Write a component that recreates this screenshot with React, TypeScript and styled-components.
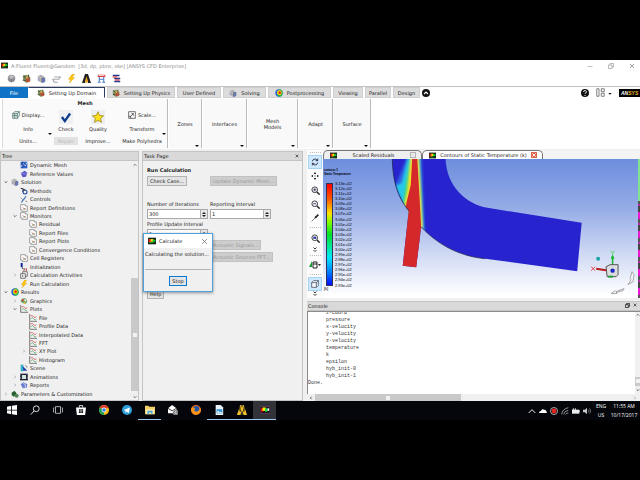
import React from "react";
import styled, { createGlobalStyle, css } from "styled-components";

const Global = createGlobalStyle`
  * { box-sizing: border-box; }
  body { margin: 0; background: #000; overflow: hidden; }
  body, button, input { font-family: "DejaVu Sans", "Noto Sans", sans-serif; font-size: 5px; line-height: 8px; color: #222; }
  button { margin: 0; padding: 0; border: 0; background: none; white-space: nowrap; }
  ul { margin: 0; padding: 0; list-style: none; }
  svg { display: block; flex: none; }
`;

/* ---------- shell ---------- */
const Screen = styled.div`
  min-height: 100vh;
  display: grid;
  grid-template-rows: 1fr 19px;
  grid-template-columns: minmax(0, 1fr);
  padding: 60px 0;
  background: #000;
`;
const AppWindow = styled.div`
  display: flex;
  flex-direction: column;
  background: #f0f0f0;
  min-width: 0;
`;
const TitleBar = styled.header`
  display: flex;
  align-items: center;
  gap: 3px;
  height: 11px;
  padding: 0 5px 0 1px;
  background: #fff;
  color: #8b8b8b;
  white-space: pre;
`;
const Spacer = styled.div`
  flex: 1;
`;
const WindowButtons = styled.div`
  display: flex;
  gap: 15px;
`;
const QuickBar = styled.div`
  display: flex;
  align-items: center;
  gap: 6px;
  height: 15px;
  padding-left: 7px;
  background: #fff;
`;
const TabRow = styled.nav`
  display: flex;
  align-items: stretch;
  gap: 2px;
  height: 12px;
  background: #fff;
  border-top: 1px solid #c2c2c2;
`;
const RibbonTab = styled.button<{ $kind?: "file" | "active"; $w: number }>`
  display: flex;
  align-items: center;
  justify-content: center;
  gap: 4px;
  width: ${(p) => p.$w}px;
  background: #dcdcdc;
  border: 1px solid #cfcfcf;
  ${(p) =>
    p.$kind === "file" &&
    css`
      background: #0f72c4;
      border-color: #0f72c4;
      color: #fff;
      margin-right: -2px;
    `}
  ${(p) =>
    p.$kind === "active" &&
    css`
      background: #fff;
      border-color: #2b3a63 #2b3a63 #fff #fff;
    `}
`;
const TabTools = styled.div`
  display: flex;
  align-items: center;
  gap: 7px;
`;
const LayoutButton = styled.button`
  display: flex;
  align-items: center;
  gap: 3px;
`;
const Brand = styled.span`
  width: 21px;
  padding-left: 2px;
  background: #000;
  color: #fff;
  font: italic bold 5px/8px "Liberation Sans", sans-serif;
  b { color: #e8b62c; }
`;

/* ---------- ribbon ---------- */
const Ribbon = styled.div`
  display: flex;
  height: 51px;
  padding: 1px 0 1px 2px;
  background: #fff;
`;
const MeshGroup = styled.section`
  display: grid;
  grid-template-columns: 50px 26px 38px 50px;
  grid-template-rows: 9px 14px 13px 12px;
  width: 166px;
  align-items: center;
  justify-items: center;
  background: #fafafa;
  border-left: 1px solid #ddd;
  border-right: 1px solid #bbb;
`;
const MeshTitle = styled.h2`
  grid-column: 1 / -1;
  margin: 0;
  font-size: 5px;
  line-height: 9px;
`;
const ToolButton = styled.button<{ $off?: boolean }>`
  display: flex;
  align-items: center;
  gap: 2px;
  padding: 0 1px;
  ${(p) => p.$off && "background:#e2e2e2;color:#bcbcbc;padding:0 4px;"}
`;
const TallButton = styled.button<{ $col: number }>`
  grid-row: 2 / span 2;
  grid-column: ${(p) => p.$col};
  display: flex;
  flex-direction: column;
  align-items: center;
  gap: 1px;
`;
const MenuTool = styled(ToolButton)`
  position: relative;
  width: 48px;
  justify-content: center;
  &::after { content: ""; position: absolute; right: 0; bottom: -2px; border: 2px solid transparent; border-top-color: #111; border-bottom: 0; }
`;
const DropGroup = styled.button<{ $w: number }>`
  position: relative;
  width: ${(p) => p.$w}px;
  margin-left: 1px;
  background: #f9f9f9;
  border-right: 1px solid #bbb;
  line-height: 6px;
  white-space: pre-line;
  &::after { content: ""; position: absolute; right: 2px; bottom: 1px; border: 2px solid transparent; border-top-color: #111; border-bottom: 0; }
`;

/* ---------- workspace ---------- */
const Workspace = styled.div`
  flex: 1;
  display: grid;
  grid-template-columns: 139px 161px minmax(0, 1fr);
  gap: 3px;
  padding-top: 2px;
  min-height: 0;
`;
const Panel = styled.section`
  position: relative;
  display: flex;
  flex-direction: column;
  border: 1px solid #c4c4c4;
  border-top: 0;
  min-width: 0;
`;
const PanelHead = styled.h3`
  display: flex;
  align-items: center;
  justify-content: space-between;
  height: 10px;
  margin: 0;
  padding: 0 3px 0 1px;
  background: #d9d9d9;
  border: 1px solid #c4c4c4;
  border-width: 1px 0;
  font-size: 5px;
  font-weight: 400;
`;
const HeadTools = styled.span`
  display: flex;
  gap: 3px;
`;
const TreeBody = styled.div`
  flex: 1;
  display: flex;
`;
const TreeList = styled.ul`
  flex: 1;
  display: grid;
  grid-auto-rows: 1fr;
  padding-bottom: 2px;
`;
const TreeRow = styled.li<{ $depth: number }>`
  display: flex;
  align-items: center;
  gap: 2px;
  padding-left: ${(p) => 2 + p.$depth * 9}px;
  line-height: 8px;
  white-space: nowrap;
`;
const Caret = styled.span`
  display: flex;
  justify-content: center;
  width: 6px;
`;
const VScroll = styled.div<{ $pos: number; $size: number; $w: number }>`
  display: grid;
  grid-template-rows: 7px ${(p) => p.$pos}fr ${(p) => p.$size}fr ${(p) => 100 - p.$pos - p.$size}fr 7px;
  width: ${(p) => p.$w}px;
  justify-items: center;
  align-items: center;
  background: #f0f0f0;
`;
const ScrollEnd = styled.span`
  grid-row: 5;
`;
const Thumb = styled.div`
  grid-row: 3;
  display: flex;
  align-items: center;
  justify-content: center;
  width: 100%;
  height: 100%;
  background: #c9c9c9;
  &::after { content: ""; width: 4px; height: 4px; background: #f2f2f2; }
`;

/* ---------- task page ---------- */
const Form = styled.form`
  display: grid;
  grid-template-columns: 61px 69px;
  column-gap: 2px;
  grid-template-rows: 11px 11px 13px 10px 10px 10px 10px 12px 12px 26px 10px;
  padding: 3px 4px;
  align-items: center;
  justify-items: start;
`;
const FormTitle = styled.h4`
  grid-column: 1 / -1;
  margin: 0;
  font-size: 5px;
`;
const PushButton = styled.button<{ $row?: number; $col?: number }>`
  grid-row: ${(p) => p.$row ?? "auto"};
  grid-column: ${(p) => p.$col ?? "auto"};
  height: 10px;
  padding: 0 2px;
  background: #e4e4e4;
  border: 1px solid #b2b2b2;
  line-height: 8px;
  &:disabled { background: #cdcdcd; border-color: #c1c1c1; color: #999; }
`;
const FieldLabel = styled.label<{ $row: number }>`
  grid-row: ${(p) => p.$row};
  white-space: nowrap;
`;
const SpinBox = styled.span<{ $row: number }>`
  grid-row: ${(p) => p.$row};
  display: flex;
  width: 61px;
  height: 10px;
  background: #fff;
  border: 1px solid #a8a8a8;
`;
const SpinInput = styled.input`
  flex: 1;
  min-width: 0;
  padding: 0 1px;
  border: 0;
  outline: 0;
  background: transparent;
  line-height: 8px;
`;
const SpinArrows = styled.span`
  display: flex;
  flex-direction: column;
  justify-content: center;
  align-items: center;
  gap: 1px;
  width: 7px;
  background: #e8e8e8;
  border-left: 1px solid #b0b0b0;
  &::before, &::after { content: ""; border: 2px solid transparent; }
  &::before { border-bottom-color: #222; border-top: 0; }
  &::after { border-top-color: #222; border-bottom: 0; }
`;
const Dialog = styled.div`
  position: absolute;
  left: 0;
  top: 82px;
  width: 70px;
  height: 59px;
  display: flex;
  flex-direction: column;
  background: #f0f0f0;
  border: 1px solid #4ba0dd;
  box-shadow: 0 1px 3px #0006;
`;
const DialogHead = styled.div`
  display: flex;
  align-items: center;
  justify-content: space-between;
  gap: 3px;
  height: 14px;
  padding: 0 4px;
  background: #fff;
  span { flex: 1; }
`;
const DialogText = styled.p`
  margin: 0 1px;
  height: 22px;
  padding-top: 2px;
  border-bottom: 1px solid #b5b5b5;
  white-space: nowrap;
`;
const StopButton = styled(PushButton)`
  align-self: center;
  margin-top: 6px;
  border: 1px solid #0878d0;
`;

/* ---------- graphics ---------- */
const RightColumn = styled.div`
  display: grid;
  grid-template-rows: minmax(0, 147fr) minmax(0, 100fr);
  gap: 3px;
  min-width: 0;
  margin-top: -1px;
`;
const GraphicsArea = styled.section`
  display: grid;
  grid-template-columns: 16px minmax(0, 1fr);
  padding-left: 1px;
  min-height: 0;
`;
const SideTools = styled.div`
  display: flex;
  flex-direction: column;
  align-items: center;
  background: #fcfcfc;
`;
const SideButton = styled.button<{ $on?: boolean; $h?: number }>`
  display: flex;
  align-items: center;
  justify-content: center;
  width: 14px;
  height: ${(p) => p.$h ?? 14}px;
  ${(p) => p.$on && "background:#cde8ff;border:1px solid #a5d3f5;"}
`;
const Grip = styled.i`
  width: 11px;
  margin: 2px 0;
  border-top: 1px dotted #bbb;
`;
const ViewColumn = styled.div`
  display: flex;
  flex-direction: column;
  min-width: 0;
`;
const ViewTabs = styled.div`
  display: flex;
  height: 9px;
  background: #f4f4f4;
`;
const ViewTab = styled.button<{ $on?: boolean; $w: number }>`
  display: flex;
  align-items: center;
  justify-content: space-between;
  width: ${(p) => p.$w}px;
  padding: 0 5px 0 6px;
  background: ${(p) => (p.$on ? "#fff" : "#efefef")};
  border: 1px solid #777;
  border-bottom: 0;
  border-radius: 5px 5px 0 0;
  line-height: 8px;
`;
const CloseBox = styled.i<{ $hot?: boolean }>`
  display: grid;
  place-items: center;
  width: 6px;
  height: 6px;
  background: ${(p) => (p.$hot ? "#e2573d" : "#e8e8e8")};
  border: 1px solid ${(p) => (p.$hot ? "#d9644e" : "#b5b5b5")};
`;
const Viewport = styled.div`
  flex: 1;
  position: relative;
  min-height: 0;
  background: linear-gradient(#6d8ede, #94abe6 35%, #cfd9f4 68%, #fff 98%);
`;
const Scene = styled.svg`
  position: absolute;
  inset: 0;
  width: 100%;
  height: 100%;
`;
const Legend = styled.div`
  position: absolute;
  inset: 9px auto 6px 1px;
  display: grid;
  grid-template-rows: 12px 1fr 6px;
  font: 4px/5px "Liberation Sans Narrow", "Liberation Sans", sans-serif;
  color: #000;
  white-space: nowrap;
`;
const LegendTitle = styled.div`
  font-size: 3px;
  line-height: 4px;
  font-weight: bold;
`;
const LegendScale = styled.div`
  display: flex;
  gap: 2px;
  padding: 3px 0 0 2px;
`;
const ColorBar = styled.div`
  width: 7px;
  border: 1px solid #335;
  background: linear-gradient(#f00, #ff5a00 15%, #ffe100 29%, #7dff00 38%, #00e02a 50%, #00e8a0 63%, #00e8ff 73%, #0080ff 87%, #0010ff);
`;
const Ticks = styled.div`
  display: grid;
  grid-auto-rows: 1fr;
  margin: -2px 0;
  align-items: center;
`;
const EdgeStrip = styled.div`
  position: absolute;
  inset: 0 0 0 auto;
  width: 2px;
  background: linear-gradient(#7fe391 0 42px, transparent 42px),
    repeating-linear-gradient(#e815cf 0 3px, #555 3px 7px, #b32ba8 7px 9px, #444 9px 15px, #f018d8 15px 19px);
`;

/* ---------- console ---------- */
const ConsolePanel = styled(Panel)`
  margin-left: 1px;
  border-width: 0;
`;
const ConsoleBody = styled.div`
  flex: 1;
  min-height: 0;
  display: grid;
  grid-template-columns: minmax(0, 1fr) 5px;
  background: #fff;
  border: 1px solid #8a8a8a;
  border-width: 1px 0 0 1px;
  overflow: hidden;
`;
const Log = styled.pre`
  margin: -2px 0 0;
  font: 5px/7px "Liberation Mono", monospace;
  color: #333;
`;
const HScroll = styled.div`
  display: grid;
  grid-template-columns: 8px 146fr 170fr 10px;
  align-items: center;
  justify-items: center;
  height: 7px;
  background: #f0f0f0;
`;
const HThumb = styled(Thumb)`
  grid-row: 1;
  grid-column: 2;
`;
const HEnd = styled.span<{ $col: number }>`
  grid-row: 1;
  grid-column: ${(p) => p.$col};
`;

/* ---------- taskbar ---------- */
const Taskbar = styled.footer`
  display: flex;
  align-items: stretch;
  background: #04060c;
  color: #fff;
  overflow: hidden;
`;
const TaskButton = styled.button<{ $open?: boolean; $active?: boolean }>`
  display: grid;
  place-items: center;
  width: 23px;
  background: ${(p) => (p.$active ? "#303338" : "transparent")};
  border-bottom: 1px solid ${(p) => (p.$open ? "#9ecbee" : "transparent")};
`;
const Tray = styled.div`
  display: flex;
  align-items: center;
  gap: 3px;
  padding-right: 3px;
`;
const TrayText = styled.div<{ $w: number }>`
  width: ${(p) => p.$w}px;
  padding-top: 1px;
  font-family: "Open Sans", sans-serif;
  line-height: 9px;
  white-space: nowrap;
  text-align: center;
`;

/* ---------- icons, drawn on a 12-unit grid ---------- */
const shapes: Record<string, React.ReactNode> = {
  app: (
    <>
      <path fill="#162b16" d="M0 1h12v10H0z" />
      <path fill="#e22" d="M1 3h4v5H1z" />
      <path fill="#fd0" d="M4 3h4v4H4z" />
      <path fill="#1c3" d="M7 4h4v3H7zM2 8h6v1H2z" />
    </>
  ),
  min: <path d="M1 7h10" stroke="#888" />,
  restore: <path d="M1 4h7v7H1zM4 4V1h7v7H8" fill="none" stroke="#777" />,
  restoreDark: <path d="M1 4h7v7H1zM4 4V1h7v7H8" fill="none" stroke="#111" strokeWidth="1.8" />,
  close: <path d="M2 2l8 8M10 2l-8 8" stroke="#777" strokeWidth="1.4" />,
  closeDark: <path d="M2 2l8 8M10 2l-8 8" stroke="#222" strokeWidth="2" />,
  closeWhite: <path d="M1 1l10 10M11 1L1 11" stroke="#fff" strokeWidth="3" />,
  ball: (
    <>
      <circle cx="6" cy="6" r="5" fill="#8f9096" />
      <path d="M2 4l4-3 4 3-4 3z" fill="#bbb" />
      <path d="M6 7v4" stroke="#666" />
    </>
  ),
  domain: (
    <>
      <path d="M1 3l5-2 5 3v5l-5 3-4-3z" fill="#7b8f5c" />
      <path d="M2 2l4 4M9 1l-1 4M1 8l4 1" stroke="#4c5a38" strokeWidth="1.5" />
      <circle cx="8" cy="8" r="3" fill="#b5503a" />
      <path d="M5 3h3v3H5z" fill="#d8a850" />
    </>
  ),
  cubes: (
    <>
      <path d="M1 3l4-2 4 2v6l-4 2-4-2z" fill="#a5a9c4" />
      <path d="M5 5l3-1 3 1v5l-3 2-3-1z" fill="#6a78ad" />
      <path d="M1 3l4 2v6M5 5l4-2" stroke="#e6d68a" fill="none" />
    </>
  ),
  arrowsGrey: <path d="M3 4h8L9 7H1l2 4h5" stroke="#a2a9ae" strokeWidth="1.6" fill="none" />,
  bolt: <path d="M7 0L2 7h3l-2 5 7-7H7l3-5z" fill="#ffc400" stroke="#d79b00" strokeWidth=".5" />,
  ansys: (
    <>
      <path d="M0 12L4 0h3l-3 12z" fill="#222" />
      <path d="M4 0h4l4 12H8z" fill="#222" />
      <path d="M4 10L6 3l2 7-2 2z" fill="#f2a318" />
    </>
  ),
  ansysTask: (
    <>
      <path d="M0 12L4 0h4l4 12z" fill="#383328" />
      <path d="M4 0L0 12h4l2-6 2 6h4L8 0H7l-1 4-1-4z" fill="#f5c42a" />
      <path d="M3 1l1 7M9 1L8 8" stroke="#3b2b10" strokeWidth="1.6" />
    </>
  ),
  table: (
    <>
      <path d="M1 1h10v3H1z" fill="#d33" />
      <path d="M3 4v7M9 4v7M3 7h6M1 11h4M7 11h4" stroke="#4a7bc8" strokeWidth="1.4" />
      <path d="M2 2h8" stroke="#fff" />
    </>
  ),
  listRed: (
    <>
      <path d="M1 2h9M3 6h8M3 10h8" stroke="#24398e" strokeWidth="1.8" />
      <path d="M1 4h6M4 8h6" stroke="#d22" strokeWidth="1.6" />
    </>
  ),
  rainbow: (
    <>
      <circle cx="6" cy="6" r="5.5" fill="#2464d8" />
      <path d="M6 .5a5.5 5.5 0 0 1 0 11L3 8z" fill="#2eb94a" />
      <circle cx="6.5" cy="5.5" r="3.5" fill="#ffdf00" />
      <circle cx="7" cy="5.5" r="2" fill="#e2301e" />
    </>
  ),
  up: <><circle cx="6" cy="6" r="6" fill="#111" /><path d="M3 7.500l3-3 3 3" stroke="#fff" strokeWidth="1.6" fill="none" /></>,
  help: <><circle cx="6" cy="6" r="6" fill="#111" /><path d="M4 4.500a2 2 0 1 1 3 1.500q-1 .5-1 1.500M6 9v1.400" stroke="#fff" strokeWidth="1.5" fill="none" /></>,
  layout: <path d="M1 1h3v10H1zM7 1h4v4H7zM7 7h4v4H7z" fill="none" stroke="#555" />,
  display: <><path d="M1 4l3-3h7v6l-3 4H1z" fill="#e9f2ef" stroke="#39605a" /><path d="M1 4h7v7M8 4l3-3M4 4v7M1 7h7" stroke="#39605a" fill="none" /></>,
  check: <><path d="M0 0h12v12H0z" fill="#eef0f2" /><path d="M2.500 6l2.500 3.500 4.500-6.500" stroke="#0e3c8c" strokeWidth="2" fill="none" /></>,
  star: <><path d="M0 0h12v12H0z" fill="#eceef0" /><path d="M6 1.500l1.400 3.200 3.400.3-2.600 2.200.8 3.400L6 8.900l-3 1.700.8-3.400L1.200 5l3.400-.3z" fill="#ffe01a" stroke="#8d7a10" strokeWidth=".6" /></>,
  scale: <path d="M1 1h10v10H1zM3 9l5-5M5 4h3v3M1 8h3v3" fill="none" stroke="#333" />,
  down: <path d="M2 4l4 4 4-4" stroke="#222" strokeWidth="2" fill="none" />,
  menuDown: <path d="M1 6h10l-5 5z" fill="#111" />,
  chevUp: <path d="M2 8l4-4 4 4" stroke="#333" strokeWidth="2" fill="none" />,
  right: <path d="M4 2l4 4-4 4" stroke="#777" strokeWidth="1.5" fill="none" />,
  left: <path d="M8 2L4 6l4 4" stroke="#222" strokeWidth="2" fill="none" />,
  dynMesh: <><path d="M1 1h10v10H1z" fill="#2f62c8" /><path d="M1 9l4-5 3 3 3-5" stroke="#e6f0ff" strokeWidth="1.500" fill="none" /><path d="M4 1v10M1 5h10" stroke="#14306f" strokeWidth=".7" /></>,
  refVal: <><path d="M1 5l6-4 4 3-2 6-5 1z" fill="#5b55c6" /><path d="M2 5l5 1 4-2" stroke="#a9a5f2" fill="none" /></>,
  methods: <><circle cx="7.500" cy="7.500" r="3" fill="none" stroke="#224a9f" strokeWidth="1.600" /><path d="M1 2l4 1-1 4M5 3l3 2" stroke="#223" strokeWidth="1.500" fill="none" /></>,
  controls: <><path d="M2 11l7-9" stroke="#4079b8" strokeWidth="1.800" /><path d="M1 4l3 3M8 9l3 1" stroke="#888" strokeWidth="1.300" /></>,
  report: <><path d="M1 1h7v2h3v8H3V9H1z" fill="#fff" stroke="#555" strokeWidth=".8" /><path d="M4 5l2 2 3 1" stroke="#c33" fill="none" /><path d="M5 9l3-3" stroke="#2a9a4a" /></>,
  init: <><path d="M1 0h3v6H1z" fill="#102a9c" /><path d="M3 6l1 3M5 9h3" stroke="#222" strokeWidth="1.200" /><path d="M9.500 8v4M6 10v2" stroke="#b22" strokeWidth="1.300" /></>,
  calcAct: <path d="M1 4h7v7H1zM4 4V1h7v7H8M4 6v3" fill="#eee" stroke="#444" />,
  palette: <><path d="M1 5q2-4 7-3 4 2 2 7-4 3-5 0-4 0-4-4z" fill="#6fa267" /><circle cx="4" cy="5" r="1.500" fill="#e33" /><circle cx="8" cy="5" r="1.500" fill="#fff" /><circle cx="7" cy="9" r="1.300" fill="#fc3" /></>,
  plot: <><path d="M1 0v11h11" stroke="#444" fill="none" /><path d="M2 3q3-2 5 1t4 0" stroke="#c33" fill="none" /><path d="M2 8q3-5 5-1t4 1" stroke="#3a9a58" fill="none" /></>,
  scene: <><path d="M1 1h4v10H1z" fill="#32b0c8" /><path d="M4 3l7 7H5z" fill="#1e3fa8" /><path d="M7 1l4 2v4z" fill="#999" /></>,
  film: <><path d="M0 1h12v10H0z" fill="#223" /><path d="M3 3h6v6H3z" fill="#cfe4de" /><path d="M1 2v8M11 2v8" stroke="#fff" strokeDasharray="1 1" /></>,
  reports: <><path d="M1 5l4-3 6 3-1 5-6 1z" fill="#6d7fd0" /><path d="M5 3l3 3v4" stroke="#fff" fill="none" /></>,
  params: <><path d="M1 4l4-3 3 3v4l-4 2-3-2z" fill="#2d6d35" /><circle cx="8.500" cy="8.500" r="3" fill="#57835a" /><path d="M2 5h5" stroke="#133" /></>,
  rotate: <path d="M2 5a4 4 0 0 1 7-2l1 1M10 1v3H7M10 7a4 4 0 0 1-7 2L2 8M2 11V8h3" stroke="#223" strokeWidth="1.300" fill="none" />,
  pan: <path d="M6 0l2 3H4zM6 12l2-3H4zM0 6l3-2v4zM12 6L9 4v4zM5.300 5.300h1.400v1.400H5.300z" fill="#222" />,
  zoomIn: <><circle cx="5" cy="5" r="3.800" fill="#eef" stroke="#333" strokeWidth="1.200" /><path d="M8 8l3.500 3.500" stroke="#222" strokeWidth="2" /><path d="M3 5h4M5 3v4" stroke="#222" /></>,
  zoomBox: <><circle cx="5" cy="5" r="3.800" fill="#eef" stroke="#333" strokeWidth="1.200" /><path d="M8 8l3.500 3.500" stroke="#222" strokeWidth="2" /><path d="M3 5h4" stroke="#222" /></>,
  zoomFit: <><circle cx="5" cy="5" r="3.800" fill="#fff" stroke="#333" strokeWidth="1.200" /><path d="M8 8l3.500 3.500" stroke="#222" strokeWidth="2" /><path d="M3 3.500h4v3H3z" fill="#2a3aa0" /></>,
  probe: <><path d="M1 11l6-6" stroke="#777" strokeWidth="1.400" /><path d="M6 4l2 2M7 5l4-4" stroke="#222" strokeWidth="2.400" /></>,
  dblDown: <path d="M3 1l3 3 3-3M3 6l3 3 3-3" stroke="#222" strokeWidth="1.800" fill="none" />,
  views: <><path d="M0 8l3-6v6z" fill="#1a9a32" /><path d="M4 3h4v6H4z" fill="#fff" stroke="#222" /><path d="M9 5h3l-1.500 2z" fill="#222" /><path d="M4 5h4" stroke="#222" /></>,
  cube: <path d="M1 4h7v7H1zM1 4l3-3h7L8 4M11 1v7l-3 3" fill="#f6fbff" stroke="#334" />,
  win: <path fill="#fff" d="M0 2l5-1v4.600H0zM6 1l6-1v5.600H6zM0 6.500h5V11l-5-1zM6 6.500h6V12l-6-1z" />,
  search: <><circle cx="7.500" cy="4.500" r="3.500" fill="none" stroke="#ddd" strokeWidth="1.200" /><path d="M5 7l-4 4.500" stroke="#ddd" strokeWidth="1.200" /></>,
  taskview: <path d="M3 2h6v8H3zM1.500 3.500H.5v5h1M10.500 3.500h1v5h-1" fill="none" stroke="#ccc" />,
  store: <><path fill="#fff" d="M0 3h12l-1 9H1z" /><path d="M4 3V.7h4V3" stroke="#fff" fill="none" /><path fill="#111" d="M3.500 5h2.200v2H3.500zM6.300 5h2.200v2H6.300zM3.500 7.600h2.200v2H3.500zM6.300 7.600h2.200v2H6.300z" /></>,
  chrome: <><circle cx="6" cy="6" r="6" fill="#fbc116" /><path d="M6 6L.8 3A6 6 0 0 1 11.200 3z" fill="#e33b2e" /><path d="M6 6L.8 3A6 6 0 0 0 6 12z" fill="#1fa055" /><circle cx="6" cy="6" r="2.900" fill="#fff" /><circle cx="6" cy="6" r="2.200" fill="#3b7de8" /></>,
  telegram: <><circle cx="6" cy="6" r="6" fill="#2d9fdb" /><path d="M2 6l7.500-3-1.300 6.500L5.500 8 4.500 9.500 4 7z" fill="#fff" /></>,
  folder: <><path d="M0 1h4l1 1h7v9H0z" fill="#f2cf68" /><path d="M1 5h10v6H1z" fill="#fbe9a6" /><path d="M3 7h6v4H7.500V9h-3v2H3z" fill="#46a3dc" /></>,
  mail: <><path d="M0 4l5-4 5 4v6H0z" fill="#fff" /><path d="M0 4l5 3 5-3" stroke="#111" fill="none" /><circle cx="9" cy="9" r="3" fill="#555" stroke="#ddd" strokeWidth=".7" /><path d="M9.500 11V7L7.600 9.600h3" stroke="#fff" strokeWidth=".7" fill="none" /></>,
  firefox: <><circle cx="6" cy="6" r="6" fill="#e8641b" /><circle cx="6.500" cy="5" r="3.700" fill="#2456a8" /><path d="M0 5q1-3 2-3 0 2 3 2l-1 3q2 2 5 0 2-2 1-5 3 3 1 7-3 4-8 2Q0 9 0 5z" fill="#f7941d" /></>,
  doc: <><path d="M2 0h6l3 3v9H2z" fill="#e9f4fb" /><path d="M3 5h7v5H3z" fill="#3a97d8" /><path d="M3 9l2-2 2 2 1-1 2 2" fill="#fff" /></>,
  fluent: <><path fill="#111" d="M0 2h12v8H0z" stroke="#b5a" strokeWidth=".5" /><path fill="#e11" d="M1 4h3v4H1z" /><path fill="#fe0" d="M3 3h4v4H3z" /><path fill="#1d4" d="M6 4h3v4H6z" /><path fill="#fff" d="M9 4h2v3H9z" /></>,
  chevW: <path d="M1 9l5-5 5 5" stroke="#eee" strokeWidth="1.500" fill="none" />,
  cloud: <path d="M0 9q0-3 3-3 1-4 5-2 3 0 4 5z" fill="#fff" />,
  rec: <><circle cx="6" cy="6" r="5.300" fill="#111" stroke="#eee" /><circle cx="6" cy="6" r="3.600" fill="#e22020" /></>,
  wifi: <path d="M1 11Q2 3 11 1M4 11q1-5 7-6M7 11q1-2 4-2" stroke="#aaa" strokeWidth="1.300" fill="none" />,
  battery: <><path d="M0 4h11v6H0z" fill="#eee" /><path d="M2 2v5M5 2v4M11 6h1v2" stroke="#eee" strokeWidth="1.500" /></>,
  sound: <><path d="M0 4h3l3-3v10L3 8H0z" fill="#ccc" /><path d="M8 4q2 2 0 4M10 2q3 4 0 8" stroke="#999" fill="none" /></>,
};
const Icon = ({ n, s = 8 }: { n: string; s?: number }) => (
  <svg width={s} height={s} viewBox="0 0 12 12" aria-hidden="true">
    {shapes[n]}
  </svg>
);

/* ---------- data ---------- */
type Node = [depth: number, caret: "down" | "right" | "", icon: string, label: string];
const tree: Node[] = [
  [1, "", "dynMesh", "Dynamic Mesh"],
  [1, "", "refVal", "Reference Values"],
  [0, "down", "cubes", "Solution"],
  [1, "", "methods", "Methods"],
  [1, "", "controls", "Controls"],
  [1, "", "report", "Report Definitions"],
  [1, "down", "report", "Monitors"],
  [2, "", "report", "Residual"],
  [2, "", "report", "Report Files"],
  [2, "", "report", "Report Plots"],
  [2, "", "report", "Convergence Conditions"],
  [1, "", "report", "Cell Registers"],
  [1, "", "init", "Initialization"],
  [1, "right", "calcAct", "Calculation Activities"],
  [1, "", "bolt", "Run Calculation"],
  [0, "down", "rainbow", "Results"],
  [1, "right", "palette", "Graphics"],
  [1, "down", "plot", "Plots"],
  [2, "", "plot", "File"],
  [2, "", "plot", "Profile Data"],
  [2, "", "plot", "Interpolated Data"],
  [2, "", "plot", "FFT"],
  [2, "right", "plot", "XY Plot"],
  [2, "", "plot", "Histogram"],
  [1, "", "scene", "Scene"],
  [1, "right", "film", "Animations"],
  [1, "right", "reports", "Reports"],
  [0, "right", "params", "Parameters & Customization"],
];
const ticks = Array.from({ length: 21 }, (_, i) => `${((313 - i) / 100).toFixed(2)}e+02`);
const log = `      z-coord
      pressure
      x-velocity
      y-velocity
      z-velocity
      temperature
      k
      epsilon
      hyb_init-0
      hyb_init-1
Done.`;
const ribbonTabs: [string, number, string?][] = [
  ["Setting Up Physics", 68, "domain"],
  ["User Defined", 44],
  ["Solving", 43, "cubes"],
  ["Postprocessing", 63, "rainbow"],
  ["Viewing", 30],
  ["Parallel", 26],
  ["Design", 27],
];
const taskIcons: [string, boolean?, boolean?][] = [
  ["win"], ["search"], ["taskview"], ["store"], ["chrome"], ["telegram"],
  ["folder", true], ["mail"], ["firefox"], ["doc", true], ["ansysTask", true], ["fluent", true, true],
];

const Contours = () => (
  <Scene viewBox="322 159 318 139" preserveAspectRatio="xMidYMid meet" role="img" aria-label="Static temperature contours">
    <defs>
      <clipPath id="duct">
        <path d="M391.500 159C392 180 396 196 408 211L402 266 415.500 267.500 420.500 227C440 248 463 257 485 259L577 271.500 581.500 223 487 208C465 204 446 186 445 159z" />
      </clipPath>
      <filter id="soft" x="-20%" y="-20%" width="140%" height="140%">
        <feGaussianBlur stdDeviation="1" />
      </filter>
    </defs>
    <g clipPath="url(#duct)">
      <path fill="#2724cf" d="M385 155h205v120H385z" />
      <g filter="url(#soft)">
        <path fill="#2f62e0" d="M407 155L396 182 390 190 408 216 424 236 421 155z" />
        <path fill="#25c8ea" d="M408 155L401 183 395 186 406 212 424 240 420 185 419 155z" />
        <path fill="#3fd862" d="M409.500 155L404 190 402 205 409 220 422.500 232 421 195 418.500 155z" />
        <path fill="#ffe21e" d="M410.500 155L407 190 404 205 409 214 421.500 230 419.500 190 417.500 155z" />
      </g>
      <path fill="#d5282b" d="M411.500 158L410 185 405.500 204 400 270 417 270 420.500 228 419 200 416.500 158z" />
    </g>
    <path d="M391.500 159C392 180 396 196 408 211M420.500 227C440 248 463 257 485 259" stroke="#1b2040" strokeWidth=".7" fill="none" />
    <circle cx="598" cy="259" r="2" fill="#1aa5a8" />
    <path d="M612.500 265v-9" stroke="#18b52e" strokeWidth="1.500" />
    <path d="M612.500 255l-2 4h4z" fill="#18b52e" />
    <path d="M610.500 251l2 2.500 2-2.500M612.500 253v2" stroke="#40d850" fill="none" strokeWidth=".8" />
    <path d="M591 267l4 4m0-4l-4 4" stroke="#e0363c" strokeWidth=".9" />
    <path d="M596 269l10 1.500" stroke="#b81c1c" strokeWidth="2" />
    <path d="M606 267l4-2h8v10l-2 2h-9z" fill="#ddd" stroke="#555" />
    <path d="M608 276h5v2h-5z" fill="#22a03a" />
    <circle cx="612.500" cy="271" r="2.200" fill="#1a28c8" />
    <path d="M611 294l4-3 1 1 8-3-1 2-7 2 1 1zM628 285l3-5-1-1 2-7 2 3-1 7z" fill="#f4f4f8" stroke="#888" strokeWidth=".7" />
  </Scene>
);

export default function App() {
  return (
    <>
      <Global />
      <Screen>
        <AppWindow>
          <TitleBar>
            <Icon n="app" s={7} />
            <span>{"A:Fluent Fluent@Gandom  [3d, dp, pbns, ske] [ANSYS CFD Enterprise]"}</span>
            <Spacer />
            <WindowButtons>
              <button aria-label="Minimize"><Icon n="min" s={6} /></button>
              <button aria-label="Restore"><Icon n="restore" s={6} /></button>
              <button aria-label="Close"><Icon n="close" s={6} /></button>
            </WindowButtons>
          </TitleBar>
          <QuickBar>
            {["ball", "domain", "cubes", "arrowsGrey", "bolt", "ansys", "table", "listRed"].map((n) => (
              <button key={n} aria-label={n}><Icon n={n} s={9} /></button>
            ))}
          </QuickBar>
          <TabRow>
            <RibbonTab $kind="file" $w={28}>File</RibbonTab>
            <RibbonTab $kind="active" $w={77}><Icon n="domain" />Setting Up Domain</RibbonTab>
            {ribbonTabs.map(([t, w, i]) => (
              <RibbonTab key={t} $w={w}>{i && <Icon n={i} />}{t}</RibbonTab>
            ))}
            <TabTools><button aria-label="Collapse ribbon"><Icon n="up" s={8} /></button></TabTools>
            <Spacer />
            <TabTools>
              <button aria-label="Help"><Icon n="help" s={8} /></button>
              <LayoutButton aria-label="Layout"><Icon n="layout" s={9} /><Icon n="menuDown" s={4} /></LayoutButton>
              <Brand>AN<b>SYS</b></Brand>
            </TabTools>
          </TabRow>
          <Ribbon>
            <MeshGroup>
              <MeshTitle>Mesh</MeshTitle>
              <TallButton $col={2}><Icon n="check" s={14} />Check</TallButton>
              <TallButton $col={3}><Icon n="star" s={14} />Quality</TallButton>
              <ToolButton><Icon n="display" />Display...</ToolButton>
              <ToolButton><Icon n="scale" />Scale...</ToolButton>
              <MenuTool>Info</MenuTool>
              <MenuTool>Transform</MenuTool>
              <ToolButton>Units...</ToolButton>
              <ToolButton $off>Repair</ToolButton>
              <ToolButton>Improve...</ToolButton>
              <ToolButton>Make Polyhedra</ToolButton>
            </MeshGroup>
            <DropGroup $w={33}>Zones</DropGroup>
            <DropGroup $w={44}>Interfaces</DropGroup>
            <DropGroup $w={50}>{"Mesh\nModels"}</DropGroup>
            <DropGroup $w={34}>Adapt</DropGroup>
            <DropGroup $w={37}>Surface</DropGroup>
          </Ribbon>
          <Workspace>
            <Panel>
              <PanelHead>Tree</PanelHead>
              <TreeBody>
                <TreeList>
                  {tree.map(([d, c, i, t]) => (
                    <TreeRow key={t} $depth={d}>
                      <Caret>{c && <Icon n={c} s={4} />}</Caret>
                      <Icon n={i} />
                      {t}
                    </TreeRow>
                  ))}
                </TreeList>
                <VScroll $pos={49} $size={50} $w={7}>
                  <Icon n="chevUp" s={4} />
                  <Thumb />
                  <ScrollEnd><Icon n="down" s={4} /></ScrollEnd>
                </VScroll>
              </TreeBody>
            </Panel>
            <Panel>
              <PanelHead>Task Page<Icon n="closeDark" s={4} /></PanelHead>
              <Form onSubmit={(e) => e.preventDefault()}>
                <FormTitle>Run Calculation</FormTitle>
                <PushButton type="button" $row={2}>Check Case...</PushButton>
                <PushButton type="button" $row={2} $col={2} disabled>Update Dynamic Mesh...</PushButton>
                <FieldLabel $row={4} htmlFor="iters">Number of Iterations</FieldLabel>
                <FieldLabel $row={4} htmlFor="report">Reporting Interval</FieldLabel>
                <SpinBox $row={5}><SpinInput id="iters" defaultValue="300" /><SpinArrows /></SpinBox>
                <SpinBox $row={5}><SpinInput id="report" defaultValue="1" /><SpinArrows /></SpinBox>
                <FieldLabel $row={6} htmlFor="profile">Profile Update Interval</FieldLabel>
                <SpinBox $row={7}><SpinInput id="profile" defaultValue="1" /><SpinArrows /></SpinBox>
                <PushButton type="button" $row={8} $col={2} disabled>Acoustic Signals...</PushButton>
                <PushButton type="button" $row={9} $col={2} disabled>Acoustic Sources FFT...</PushButton>
                <PushButton type="button" $row={11}>Help</PushButton>
              </Form>
              <Dialog role="dialog" aria-label="Calculate">
                <DialogHead>
                  <Icon n="app" s={8} />
                  <span>Calculate</span>
                  <button aria-label="Close"><Icon n="close" s={7} /></button>
                </DialogHead>
                <DialogText>Calculating the solution...</DialogText>
                <StopButton type="button">Stop</StopButton>
              </Dialog>
            </Panel>
            <RightColumn>
              <GraphicsArea>
                <SideTools>
                  <Grip />
                  <SideButton $on aria-label="Rotate"><Icon n="rotate" /></SideButton>
                  <SideButton aria-label="Pan"><Icon n="pan" /></SideButton>
                  <SideButton aria-label="Zoom in"><Icon n="zoomIn" s={9} /></SideButton>
                  <SideButton aria-label="Zoom box"><Icon n="zoomBox" s={9} /></SideButton>
                  <SideButton aria-label="Probe"><Icon n="probe" /></SideButton>
                  <Grip />
                  <SideButton $h={17} aria-label="Fit to window"><Icon n="zoomFit" s={9} /></SideButton>
                  <Icon n="dblDown" s={6} />
                  <Grip />
                  <SideButton aria-label="Views"><Icon n="views" s={12} /></SideButton>
                  <Grip />
                  <SideButton $on aria-label="Projection"><Icon n="cube" /></SideButton>
                  <Icon n="dblDown" s={6} />
                </SideTools>
                <ViewColumn>
                  <ViewTabs>
                    <ViewTab $w={99}><Icon n="app" s={7} />Scaled Residuals<CloseBox /></ViewTab>
                    <ViewTab $on $w={121}><Icon n="app" s={7} />Contours of Static Temperature (k)<CloseBox $hot><Icon n="closeWhite" s={4} /></CloseBox></ViewTab>
                  </ViewTabs>
                  <Viewport>
                    <Contours />
                    <Legend>
                      <LegendTitle>contour-1<br />Static Temperature</LegendTitle>
                      <LegendScale>
                        <ColorBar />
                        <Ticks>{ticks.map((t) => <span key={t}>{t}</span>)}</Ticks>
                      </LegendScale>
                      <div>[k]</div>
                    </Legend>
                    <EdgeStrip />
                  </Viewport>
                </ViewColumn>
              </GraphicsArea>
              <ConsolePanel>
                <PanelHead>Console<HeadTools><Icon n="restoreDark" s={5} /><Icon n="closeDark" s={4} /></HeadTools></PanelHead>
                <ConsoleBody>
                  <Log>{log}</Log>
                  <VScroll $pos={85} $size={13} $w={5}>
                    <Icon n="chevUp" s={4} />
                    <Thumb />
                    <ScrollEnd><Icon n="down" s={4} /></ScrollEnd>
                  </VScroll>
                </ConsoleBody>
                <HScroll>
                  <HEnd $col={1}><Icon n="left" s={4} /></HEnd>
                  <HThumb />
                  <HEnd $col={4}><Icon n="right" s={4} /></HEnd>
                </HScroll>
              </ConsolePanel>
            </RightColumn>
          </Workspace>
        </AppWindow>
        <Taskbar>
          {taskIcons.map(([n, open, active]) => (
            <TaskButton key={n} $open={open} $active={active} aria-label={n}><Icon n={n} s={10} /></TaskButton>
          ))}
          <Spacer />
          <Tray>
            {["chevW", "cloud", "rec", "wifi", "battery", "sound"].map((n) => <Icon key={n} n={n} s={8} />)}
          </Tray>
          <TrayText $w={14}>ENG<br />US</TrayText>
          <TrayText $w={32}>11:55 AM<br />10/17/2017</TrayText>
        </Taskbar>
      </Screen>
    </>
  );
}
